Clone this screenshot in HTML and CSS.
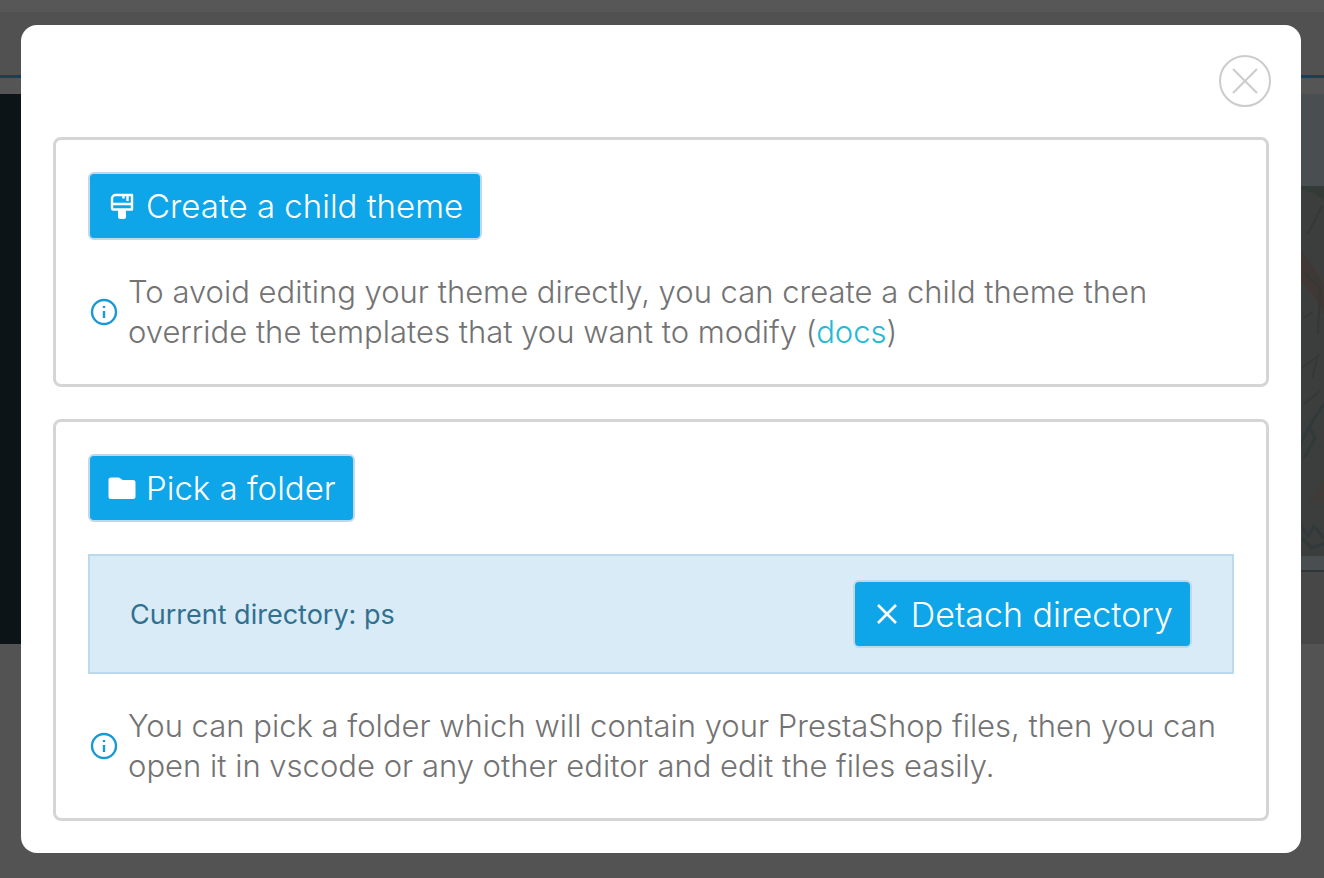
FILE: index.html
```html
<!DOCTYPE html>
<html lang="en">
<head>
<meta charset="utf-8">
<title>Theme editor</title>
<link rel="stylesheet" href="styles.css">
</head>
<body>
<div class="page" aria-hidden="true">
  <div class="topbar"></div>
  <div class="tabs"></div>
  <div class="toolbar"></div>
  <div class="workspace">
    <div class="code"></div>
    <div class="preview">
      <div class="preview-head"></div>
      <svg class="artwork" viewBox="0 0 24 370" preserveAspectRatio="none">
        <rect width="24" height="370" fill="#3c3e3d"/>
        <path d="M0 0H24V14L12 6 0 3Z" fill="#323b36"/>
        <path d="M2 64L10 76 24 98V128L12 108 0 94Z" fill="#403835"/>
        <path d="M8 48L22 20M5 88L20 102 18 148M3 132L13 126M2 182L18 170 12 192M4 218L20 205" fill="none" stroke="#363838" stroke-width="2"/>
        <path d="M0 258L12 236 24 218M4 272L15 252 10 242M0 338L8 350 14 340 24 352M2 352L12 362 24 358" fill="none" stroke="#313a3a" stroke-width="3"/>
        <path d="M8 316L24 296V316Z" fill="#403a38"/>
      </svg>
      <div class="caption"></div>
      <div class="preview-foot"></div>
    </div>
  </div>
</div>
<div class="overlay">
  <main class="dialog" role="dialog" aria-modal="true" aria-label="Theme files">
    <button class="close" type="button" aria-label="Close">
      <svg viewBox="0 0 52 52"><circle cx="26" cy="26" r="25"/><path d="M14 14L38 38M38 14L14 38"/></svg>
    </button>
    <section class="card">
      <button class="btn" type="button">
        <svg class="icon" viewBox="0 0 28 28"><path d="M7.500 3H24V17.500H5.500a1.500 1.500 0 0 1-1.500-1.500V6.500A3.500 3.500 0 0 1 7.500 3Z" fill="none" stroke="currentColor" stroke-width="2.400" stroke-linejoin="round"/><path d="M4 12H24M15.500 3V6.500M19.500 3V9" fill="none" stroke="currentColor" stroke-width="2.400"/><path d="M10 17H18V24.500a2.500 2.500 0 0 1-2.500 2.500H12.500a2.500 2.500 0 0 1-2.500-2.500Z" fill="currentColor"/></svg>
        Create a child theme
      </button>
      <div class="info">
        <svg class="info-icon" viewBox="0 0 28 28"><circle cx="14" cy="14" r="12"/><path d="M14 13V20M14 8V10"/></svg>
        <p>To avoid editing your theme directly, you can create a child theme then override the templates that you want to modify (<a href="#docs">docs</a>)</p>
      </div>
    </section>
    <section class="card">
      <button class="btn" type="button">
        <svg class="icon" viewBox="0 0 28 28"><path d="M3 3.500H10.500C12.500 3.500 13 6 15 6H25a2.500 2.500 0 0 1 2.500 2.500V22.500A2.500 2.500 0 0 1 25 25H3A2.500 2.500 0 0 1 .500 22.500V6A2.500 2.500 0 0 1 3 3.500Z" fill="currentColor"/></svg>
        Pick a folder
      </button>
      <div class="alert">
        <span>Current directory: ps</span>
        <button class="btn" type="button">
          <svg class="icon" viewBox="0 0 28 28"><path d="M5 5L23 23M23 5L5 23" fill="none" stroke="currentColor" stroke-width="2.600"/></svg>
          Detach directory
        </button>
      </div>
      <div class="info">
        <svg class="info-icon" viewBox="0 0 28 28"><circle cx="14" cy="14" r="12"/><path d="M14 13V20M14 8V10"/></svg>
        <p>You can pick a folder which will contain your PrestaShop files, then you can open it in vscode or any other editor and edit the files easily.</p>
      </div>
    </section>
  </main>
</div>
</body>
</html>
```
FILE: styles.css
```css
* { box-sizing: border-box; }
body {
  margin: 0;
  min-height: 100vh;
  background: #535353;
  font-family: Inter, "Open Sans", sans-serif;
  font-weight: 300;
  color: #737373;
}
.page {
  position: absolute;
  inset: 0;
  overflow: hidden;
  display: flex;
  flex-direction: column;
}
.topbar { height: 12px; background: #575757; }
.tabs { height: 66px; border-bottom: 3px solid #173f58; background: #515151; }
.toolbar { height: 16px; background: #555; }
.workspace { display: flex; height: 550px; }
.code { flex: 1; background: #0d1418; }
.preview { flex: 1; display: flex; flex-direction: column; background: #494f50; }
.preview-head { height: 92px; }
.artwork { align-self: flex-end; width: 24px; height: 370px; }
.caption { height: 16px; border-bottom: 2px solid #303536; }
.preview-foot { flex: 1; background: #474747; }
.overlay { position: relative; padding: 25px 23px 25px 21px; }
.dialog {
  display: flex;
  flex-direction: column;
  gap: 32px;
  padding: 30px 32px 32px;
  border-radius: 16px;
  background: #fff;
}
.close {
  align-self: flex-end;
  width: 52px;
  height: 52px;
  margin: 0 -2px -2px 0;
  padding: 0;
  border: 0;
  background: none;
}
.close svg { display: block; fill: none; stroke: #ccc; stroke-width: 2; }
.card {
  display: flex;
  flex-direction: column;
  align-items: flex-start;
  gap: 32px;
  padding: 32px;
  border: 3px solid #d4d6d6;
  border-radius: 8px;
}
.btn {
  display: flex;
  align-items: center;
  gap: 10px;
  height: 68px;
  padding: 0 17px 0 18px;
  border: 2px solid #bfd9eb;
  border-radius: 6px;
  background: #0ea5e9;
  color: #fff;
  font: inherit;
  font-size: 33px;
  white-space: nowrap;
}
.icon { flex: none; width: 28px; height: 28px; }
.info { display: flex; align-items: center; gap: 8px; font-size: 31px; line-height: 40px; }
.info p { margin: 0; }
.info a { color: #25b9d7; text-decoration: none; }
.info-icon { flex: none; width: 32px; height: 28px; fill: none; stroke: #1898d5; stroke-width: 2.4; }
.alert {
  align-self: stretch;
  display: flex;
  align-items: center;
  justify-content: space-between;
  padding: 24px 40px;
  border: 2px solid #bcdaee;
  background: #d9ebf7;
  color: #31708f;
  font-size: 27px;
  font-weight: 400;
}
.alert .btn { font-size: 34px; font-weight: 300; }
```
